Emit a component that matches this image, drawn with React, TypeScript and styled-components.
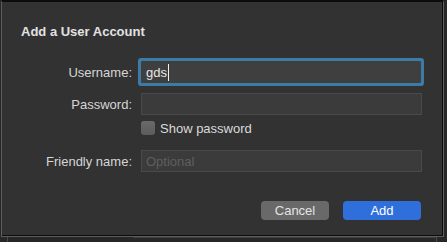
import React from "react";
import styled, { createGlobalStyle } from "styled-components";

const Global = createGlobalStyle`
  html, body { margin: 0; padding: 0; background: #272727; }
  body { font-family: "Liberation Sans", Arial, sans-serif; -webkit-font-smoothing: antialiased; }
  * { box-sizing: border-box; }
`;

const Page = styled.div`
  width: 447px;
  height: 242px;
  overflow: hidden;
  background: #272727;
`;

const Dialog = styled.div`
  margin-left: 1px;
  width: 443px;
  height: 237px;
  background: #323232;
  border-top: 2px solid #0c0c0c;
  border-left: 1px solid #5e5e5e;
  border-right: 1px solid #5e5e5e;
  border-bottom: 1px solid #5e5e5e;
  box-shadow: inset -1px -1px 0 #0c0c0c;
  padding: 22px 0 0 19px;
  display: flex;
  flex-direction: column;
`;

const Title = styled.div`
  font-size: 13px;
  line-height: 16px;
  font-weight: 700;
  color: #e2e2e2;
  margin-bottom: 21px;
`;

const Row = styled.div<{ $mt?: number }>`
  display: grid;
  grid-template-columns: 111px 281px;
  column-gap: 9px;
  align-items: center;
  margin-top: ${(p) => p.$mt ?? 0}px;
`;

const Label = styled.label`
  text-align: right;
  font-size: 13px;
  color: #d6d6d6;
  white-space: nowrap;
`;

const Field = styled.div<{ $focused?: boolean }>`
  height: 22px;
  background: ${(p) => (p.$focused ? "#3f3f3f" : "#3b3b3b")};
  border: 1px solid ${(p) => (p.$focused ? "#3f3f3f" : "#4a4a4a")};
  box-shadow: ${(p) => (p.$focused ? "0 0 0 3px #3d7ba4" : "none")};
  border-radius: ${(p) => (p.$focused ? "1px" : "0")};
  width: ${(p) => (p.$focused ? "280px" : "281px")};
  display: flex;
  align-items: center;
  padding-left: 4px;
  font-size: 13px;
  color: #e6e6e6;
`;

const Placeholder = styled.span`
  color: #5f5f5f;
`;

const Caret = styled.span`
  display: inline-block;
  width: 1px;
  height: 17px;
  background: #f0f0f0;
  margin-left: 1px;
`;

const CheckWrap = styled.div`
  display: flex;
  align-items: center;
  gap: 5px;
  height: 14px;
`;

const Checkbox = styled.span`
  width: 14px;
  height: 14px;
  border-radius: 3px;
  background: linear-gradient(#6a6a6a, #5c5c5c);
`;

const CheckText = styled.span`
  font-size: 13px;
  color: #dadada;
`;

const Buttons = styled.div`
  margin-top: 29px;
  margin-left: 120px;
  width: 281px;
  padding-right: 1px;
  display: flex;
  justify-content: flex-end;
  gap: 14px;
`;

const Button = styled.button<{ $primary?: boolean; $w: number }>`
  width: ${(p) => p.$w}px;
  height: 19px;
  border: none;
  border-radius: 4px;
  padding: 0;
  font-family: "Liberation Sans", Arial, sans-serif;
  font-size: 13px;
  color: ${(p) => (p.$primary ? "#ffffff" : "#e4e4e4")};
  background: ${(p) => (p.$primary ? "#2f6fdc" : "#696969")};
`;

const Strip = styled.div`
  display: flex;
  height: 5px;
`;

const Gap = styled.div<{ $w: number }>`
  width: ${(p) => p.$w}px;
`;

const VLine = styled.div`
  width: 1px;
  background: #474747;
`;

const HSeg = styled.div<{ $w: number }>`
  width: ${(p) => p.$w}px;
  border-top: 1px solid #3e3e3e;
`;

export default function App() {
  return (
    <Page>
      <Global />
      <Dialog>
        <Title>Add a User Account</Title>
        <Row>
          <Label>Username:</Label>
          <Field $focused>
            gds
            <Caret />
          </Field>
        </Row>
        <Row $mt={10}>
          <Label>Password:</Label>
          <Field />
        </Row>
        <Row $mt={6}>
          <span />
          <CheckWrap>
            <Checkbox />
            <CheckText>Show password</CheckText>
          </CheckWrap>
        </Row>
        <Row $mt={15}>
          <Label>Friendly name:</Label>
          <Field>
            <Placeholder>Optional</Placeholder>
          </Field>
        </Row>
        <Buttons>
          <Button $w={68}>Cancel</Button>
          <Button $primary $w={78}>Add</Button>
        </Buttons>
      </Dialog>
      <Strip>
        <Gap $w={7} />
        <VLine />
        <Gap $w={125} />
        <HSeg $w={303} />
        <VLine />
      </Strip>
    </Page>
  );
}
